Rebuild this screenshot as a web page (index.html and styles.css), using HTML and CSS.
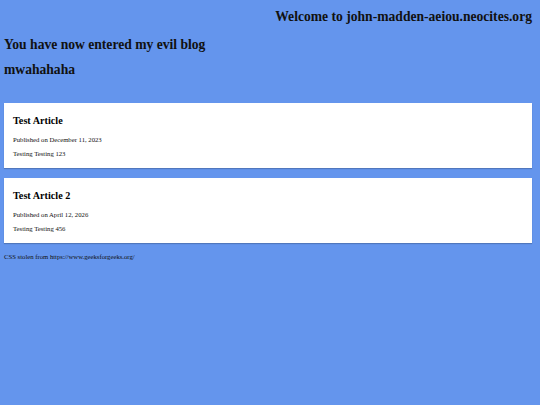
FILE: index.html
```html
<!DOCTYPE html>
<html>
<head>
<meta charset="utf-8">
<link rel="stylesheet" href="styles.css">
</head>
<body>
<div class="page">
  <h2 class="site-title">Welcome to john-madden-aeiou.neocites.org</h2>
  <h2 class="intro">You have now entered my evil blog</h2>
  <h2 class="tagline">mwahahaha</h2>
  <div class="card first">
    <h3 class="card-title">Test Article</h3>
    <p class="meta">Published on December 11, 2023</p>
    <p class="body">Testing Testing 123</p>
  </div>
  <div class="card">
    <h3 class="card-title">Test Article 2</h3>
    <p class="meta">Published on April 12, 2026</p>
    <p class="body">Testing Testing 456</p>
  </div>
  <p class="footer">CSS stolen from https://www.geeksforgeeks.org/</p>
</div>
</body>
</html>
```
FILE: styles.css
```css
html, body {
  margin: 0;
  padding: 0;
  background: #6495ed;
}
body {
  font-family: "Liberation Serif", "Times New Roman", serif;
  color: #111;
}
.page {
  padding: 0 8px 0 4px;
}
.site-title, .intro, .tagline {
  font-size: 13.6px;
  line-height: 16px;
  font-weight: bold;
  margin: 0;
}
.site-title {
  text-align: right;
  padding-top: 9px;
}
.intro {
  margin-top: 12px;
}
.tagline {
  margin-top: 9px;
}
.card {
  background: #fff;
  padding: 11px 9px 10px;
  margin-top: 10px;
  box-shadow: 0 1px 1px rgba(0,0,0,0.2);
}
.card.first {
  margin-top: 25px;
}
.card-title {
  font-size: 10.2px;
  line-height: 14px;
  margin: 0;
  font-weight: bold;
  color: #000;
}
.meta, .body {
  font-size: 6.7px;
  line-height: 9px;
  margin: 0;
}
.meta {
  margin-top: 7px;
}
.body {
  margin-top: 5px;
}
.footer {
  font-size: 6.7px;
  line-height: 9px;
  margin: 9px 0 0;
}
```
